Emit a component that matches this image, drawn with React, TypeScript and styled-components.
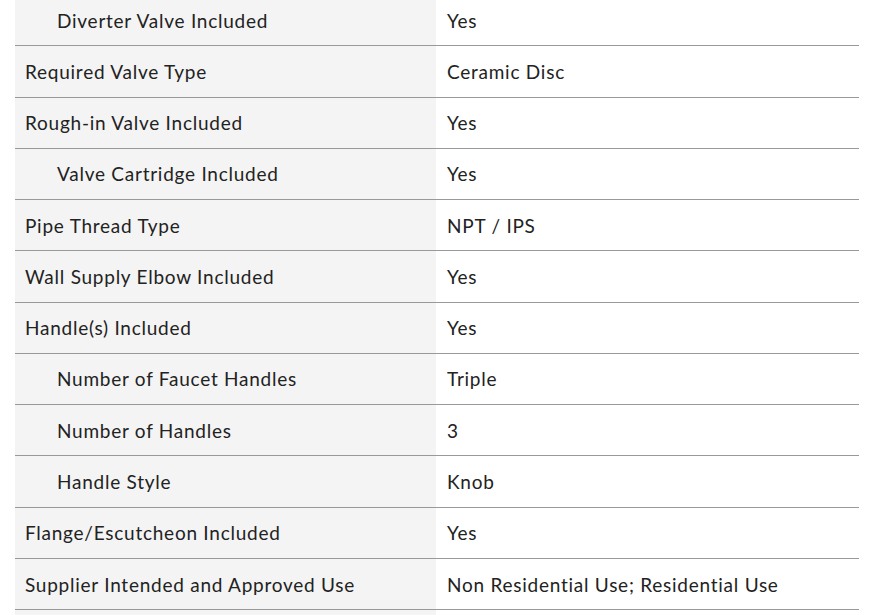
import React from "react";
import styled, { createGlobalStyle } from "styled-components";

const Global = createGlobalStyle`
  html, body { margin: 0; padding: 0; background: #ffffff; }
  body { font-family: "Lato", "Open Sans", sans-serif; color: #222222; overflow: hidden; }
`;

const Wrapper = styled.div`
  padding: 0 20px 0 15px;
  margin-top: -5px;
`;

const Table = styled.div`
  display: flex;
  flex-direction: column;
  width: 844px;
`;

const Row = styled.div`
  display: grid;
  grid-template-columns: 421px 1fr;
  height: 51.27px;
  box-sizing: border-box;
  border-bottom: 1px solid #999999;
`;

const Label = styled.div<{ $indent?: boolean }>`
  background: #f4f4f4;
  display: flex;
  align-items: center;
  padding-left: ${(p) => (p.$indent ? "42px" : "10px")};
  font-size: 19px;
  letter-spacing: 0.75px;
`;

const Value = styled.div`
  display: flex;
  align-items: center;
  padding-left: 11px;
  font-size: 19px;
  letter-spacing: 0.75px;
`;

const rows: [string, string, boolean][] = [
  ["Diverter Valve Included", "Yes", true],
  ["Required Valve Type", "Ceramic Disc", false],
  ["Rough-in Valve Included", "Yes", false],
  ["Valve Cartridge Included", "Yes", true],
  ["Pipe Thread Type", "NPT / IPS", false],
  ["Wall Supply Elbow Included", "Yes", false],
  ["Handle(s) Included", "Yes", false],
  ["Number of Faucet Handles", "Triple", true],
  ["Number of Handles", "3", true],
  ["Handle Style", "Knob", true],
  ["Flange/Escutcheon Included", "Yes", false],
  ["Supplier Intended and Approved Use", "Non Residential Use; Residential Use", false],
  ["", "", false],
];

export default function App() {
  return (
    <>
      <Global />
      <Wrapper>
        <Table>
          {rows.map(([l, v, ind], i) => (
            <Row key={i}>
              <Label $indent={ind}>{l}</Label>
              <Value>{v}</Value>
            </Row>
          ))}
        </Table>
      </Wrapper>
    </>
  );
}
